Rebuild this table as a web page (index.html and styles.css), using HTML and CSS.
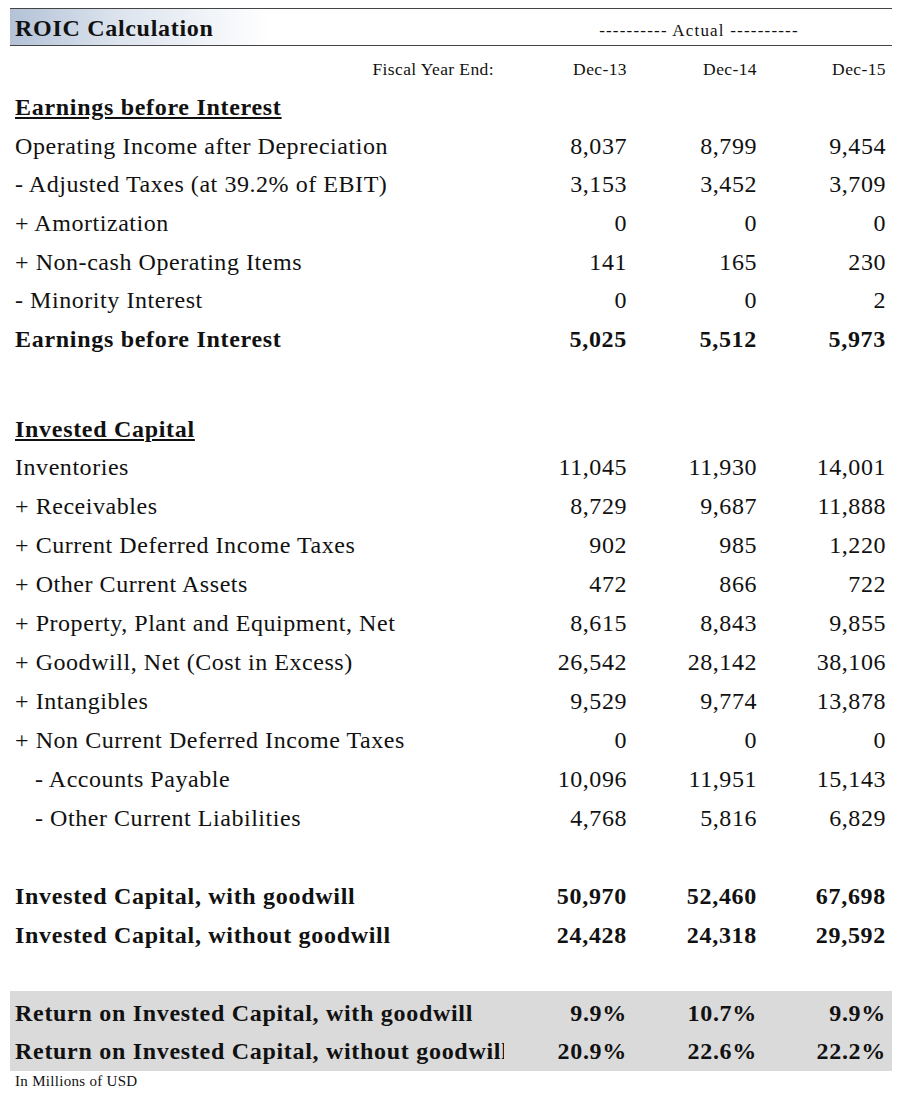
FILE: index.html
```html
<!DOCTYPE html>
<html>
<head>
<meta charset="utf-8">
<link rel="stylesheet" href="styles.css">
</head>
<body>
<div class="sheet">
  <div class="title-row">
    <div class="title">ROIC Calculation</div>
    <div class="actual">---------- Actual ----------</div>
  </div>
  <div class="row head-row">
    <div class="label fy">Fiscal Year End:</div>
    <div class="num">Dec-13</div>
    <div class="num">Dec-14</div>
    <div class="num">Dec-15</div>
  </div>

  <div class="section-a">
    <div class="row bold"><div class="label"><u>Earnings before Interest</u></div><div class="num"></div><div class="num"></div><div class="num"></div></div>
    <div class="row"><div class="label">Operating Income after Depreciation</div><div class="num">8,037</div><div class="num">8,799</div><div class="num">9,454</div></div>
    <div class="row"><div class="label">- Adjusted Taxes (at 39.2% of EBIT)</div><div class="num">3,153</div><div class="num">3,452</div><div class="num">3,709</div></div>
    <div class="row"><div class="label">+ Amortization</div><div class="num">0</div><div class="num">0</div><div class="num">0</div></div>
    <div class="row"><div class="label">+ Non-cash Operating Items</div><div class="num">141</div><div class="num">165</div><div class="num">230</div></div>
    <div class="row"><div class="label">- Minority Interest</div><div class="num">0</div><div class="num">0</div><div class="num">2</div></div>
    <div class="row bold"><div class="label">Earnings before Interest</div><div class="num">5,025</div><div class="num">5,512</div><div class="num">5,973</div></div>
  </div>

  <div class="spacer-lg"></div>

  <div class="row bold heading-b"><div class="label"><u>Invested Capital</u></div><div class="num"></div><div class="num"></div><div class="num"></div></div>
  <div class="row"><div class="label">Inventories</div><div class="num">11,045</div><div class="num">11,930</div><div class="num">14,001</div></div>
  <div class="row"><div class="label">+ Receivables</div><div class="num">8,729</div><div class="num">9,687</div><div class="num">11,888</div></div>
  <div class="row"><div class="label">+ Current Deferred Income Taxes</div><div class="num">902</div><div class="num">985</div><div class="num">1,220</div></div>
  <div class="row"><div class="label">+ Other Current Assets</div><div class="num">472</div><div class="num">866</div><div class="num">722</div></div>
  <div class="row"><div class="label">+ Property, Plant and Equipment, Net</div><div class="num">8,615</div><div class="num">8,843</div><div class="num">9,855</div></div>
  <div class="row"><div class="label">+ Goodwill, Net (Cost in Excess)</div><div class="num">26,542</div><div class="num">28,142</div><div class="num">38,106</div></div>
  <div class="row"><div class="label">+ Intangibles</div><div class="num">9,529</div><div class="num">9,774</div><div class="num">13,878</div></div>
  <div class="row"><div class="label">+ Non Current Deferred Income Taxes</div><div class="num">0</div><div class="num">0</div><div class="num">0</div></div>
  <div class="row"><div class="label indent">- Accounts Payable</div><div class="num">10,096</div><div class="num">11,951</div><div class="num">15,143</div></div>
  <div class="row"><div class="label indent">- Other Current Liabilities</div><div class="num">4,768</div><div class="num">5,816</div><div class="num">6,829</div></div>

  <div class="spacer"></div>

  <div class="row bold"><div class="label">Invested Capital, with goodwill</div><div class="num">50,970</div><div class="num">52,460</div><div class="num">67,698</div></div>
  <div class="row bold"><div class="label">Invested Capital, without goodwill</div><div class="num">24,428</div><div class="num">24,318</div><div class="num">29,592</div></div>

  <div class="spacer-sm"></div>

  <div class="band">
    <div class="row bold band-row"><div class="label">Return on Invested Capital, with goodwill</div><div class="num">9.9%</div><div class="num">10.7%</div><div class="num">9.9%</div></div>
    <div class="row bold band-row"><div class="label">Return on Invested Capital, without goodwill</div><div class="num">20.9%</div><div class="num">22.6%</div><div class="num">22.2%</div></div>
  </div>
  <div class="note">In Millions of USD</div>
</div>
</body>
</html>
```

FILE: styles.css
```css
html, body {
  margin: 0;
  padding: 0;
  background: #ffffff;
}

body {
  font-family: "Liberation Serif", "Times New Roman", serif;
  color: #111111;
}

.sheet {
  width: 882px;
  margin: 8px 0 0 10px;
}

.title-row {
  display: grid;
  grid-template-columns: 494px 388px;
  height: 36px;
  border-top: 1px solid #444444;
  border-bottom: 1px solid #444444;
  background: linear-gradient(to right, #b3c2d7 0px, #dde4ee 110px, #ffffff 260px);
  align-items: center;
}

.title {
  font-weight: bold;
  font-size: 24px;
  letter-spacing: 0.7px;
  padding-left: 5px;
  padding-top: 2px;
}

.actual {
  font-size: 17px;
  letter-spacing: 1.2px;
  text-align: center;
  padding-left: 2px;
  padding-top: 8px;
}

.row {
  display: grid;
  grid-template-columns: 489px 123px 130px 129px;
  padding: 0 6px 0 5px;
  height: 39px;
  align-items: center;
  font-size: 24px;
  letter-spacing: 0.55px;
}

.row.bold {
  font-weight: bold;
  letter-spacing: 0.7px;
}

.section-a .row {
  height: 38.7px;
}

.label {
  white-space: nowrap;
  overflow: hidden;
}

.label.indent {
  padding-left: 20px;
}

.num {
  text-align: right;
  white-space: nowrap;
}

.head-row {
  font-size: 17.5px;
  letter-spacing: 0.4px;
  height: 42px;
  padding-top: 4px;
  box-sizing: border-box;
}

.head-row .fy {
  text-align: right;
  padding-right: 10px;
}

.spacer-lg {
  height: 51.6px;
}

.heading-b {
  height: 38px;
}

.spacer {
  height: 39px;
}

.spacer-sm {
  height: 35.5px;
}

.band {
  background: #dadada;
  padding-top: 4px;
}

.band-row {
  height: 38px;
}

.note {
  font-size: 15px;
  letter-spacing: 0.3px;
  padding-left: 5px;
  line-height: 20px;
}
```
